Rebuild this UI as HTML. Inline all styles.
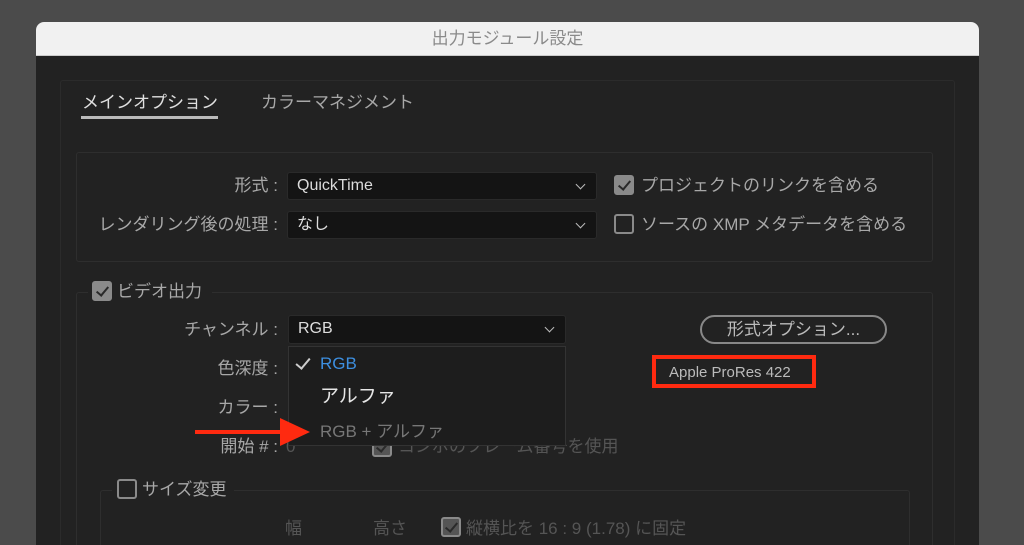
<!DOCTYPE html>
<html style="overflow:hidden;height:545px"><head><meta charset="utf-8"><style>
html,body{overflow:hidden}
body{margin:0;width:1024px;height:545px;background:#4b4b4b;font-family:"Liberation Sans","Noto Sans CJK JP",sans-serif;position:relative}
.a{position:absolute}
.win{left:36px;top:22px;width:943px;height:523px;background:#222;border-radius:8px 8px 0 0;overflow:hidden}
.title{left:0;top:0;width:943px;height:33px;background:#f1f1f1;border-bottom:1px solid #ccc;text-align:center;line-height:34px;color:#8a8a8a;font-size:17px}
.t{color:#a8a8a8;font-size:17px;white-space:nowrap;line-height:21px}
.r{right:746px;text-align:right}
.box{border:1px solid #2e2e2e;border-radius:3px;box-sizing:border-box}
.dd{background:#141414;border:1px solid #2a2a2a;border-radius:3px;color:#ddd;font-size:16px;line-height:26px;padding-left:9px;box-sizing:border-box}
.chev{position:absolute;right:12px;top:8px;width:6px;height:6px;border-right:1.5px solid #bbb;border-bottom:1.5px solid #bbb;transform:rotate(45deg)}
.cb{width:20px;height:20px;border:2px solid #8a8a8a;border-radius:3px;box-sizing:border-box}
.cb.on{background:#8a8a8a}
.cb.on:after{content:"";position:absolute;left:5px;top:1px;width:5px;height:10px;border-right:2.5px solid #2a2a2a;border-bottom:2.5px solid #2a2a2a;transform:rotate(40deg)}
</style></head><body>
<div class="a win">
<div class="a title">出力モジュール設定</div>
</div>
<div class="a box" style="left:60px;top:80px;width:895px;height:480px;border-color:#2b2b2b"></div>
<div class="a t" style="left:82px;top:92px;color:#e0e0e0">メインオプション</div>
<div class="a" style="left:81px;top:116px;width:137px;height:3px;background:#bbb"></div>
<div class="a t" style="left:261px;top:92px">カラーマネジメント</div>

<div class="a box" style="left:76px;top:152px;width:857px;height:110px"></div>
<div class="a t r" style="top:175px">形式 :</div>
<div class="a dd" style="left:287px;top:172px;width:310px;height:28px">QuickTime<div class="chev"></div></div>
<div class="a t r" style="top:214px">レンダリング後の処理 :</div>
<div class="a dd" style="left:287px;top:211px;width:310px;height:28px">なし<div class="chev"></div></div>
<div class="a cb on" style="left:614px;top:175px"></div>
<div class="a t" style="left:641px;top:175px">プロジェクトのリンクを含める</div>
<div class="a cb" style="left:614px;top:214px"></div>
<div class="a t" style="left:641px;top:214px">ソースの XMP メタデータを含める</div>

<div class="a box" style="left:76px;top:292px;width:857px;height:270px"></div>
<div class="a" style="left:88px;top:280px;width:124px;height:24px;background:#222"></div>
<div class="a cb on" style="left:92px;top:281px"></div>
<div class="a t" style="left:117px;top:281px">ビデオ出力</div>

<div class="a t r" style="top:319px">チャンネル :</div>
<div class="a dd" style="left:288px;top:315px;width:278px;height:29px">RGB<div class="chev"></div></div>
<div class="a t r" style="top:358px">色深度 :</div>
<div class="a t r" style="top:397px">カラー :</div>
<div class="a t r" style="top:436px">開始 # :</div>
<div class="a t" style="left:286px;top:436px;color:#555">0</div>
<div class="a cb on" style="left:372px;top:437px;background:#555"></div>
<div class="a t" style="left:398px;top:436px;color:#555">コンポのフレーム番号を使用</div>

<div class="a" style="left:288px;top:346px;width:278px;height:100px;background:#1d1d1d;border:1px solid #333;box-sizing:border-box"></div>
<div class="a" style="left:299px;top:355px;width:6px;height:12px;border-right:2.5px solid #ccc;border-bottom:2.5px solid #ccc;transform:rotate(40deg)"></div>
<div class="a t" style="left:320px;top:353px;color:#3d8fe0;font-size:17px">RGB</div>
<div class="a t" style="left:320px;top:385px;color:#e6e6e6;font-size:19px;line-height:24px">アルファ</div>
<div class="a t" style="left:320px;top:421px;color:#777;font-size:17px">RGB + アルファ</div>

<div class="a" style="left:195px;top:430px;width:90px;height:4px;background:#ff2a10"></div>
<svg class="a" style="left:280px;top:418px" width="30" height="28"><polygon points="0,0 30,14 0,28" fill="#ff2a10"/></svg>

<div class="a" style="left:700px;top:315px;width:187px;height:29px;border:2px solid #888;border-radius:15px;box-sizing:border-box;color:#bbb;font-size:17px;text-align:center;line-height:25px">形式オプション...</div>
<div class="a" style="left:652px;top:355px;width:164px;height:33px;border:4px solid #ff2a10;box-sizing:border-box"></div>
<div class="a t" style="left:669px;top:362px;color:#bbb;font-size:15px">Apple ProRes 422</div>

<div class="a box" style="left:100px;top:490px;width:810px;height:80px"></div>
<div class="a" style="left:112px;top:478px;width:122px;height:24px;background:#222"></div>
<div class="a cb" style="left:117px;top:479px"></div>
<div class="a t" style="left:142px;top:479px">サイズ変更</div>
<div class="a t" style="left:285px;top:518px;color:#555">幅</div>
<div class="a t" style="left:373px;top:518px;color:#555">高さ</div>
<div class="a cb on" style="left:441px;top:517px;background:#555"></div>
<div class="a t" style="left:466px;top:518px;color:#555">縦横比を 16 : 9 (1.78) に固定</div>
</body></html>
